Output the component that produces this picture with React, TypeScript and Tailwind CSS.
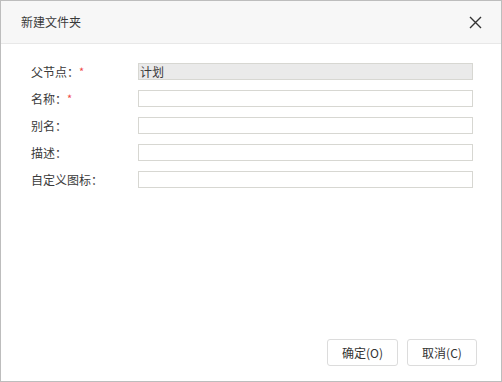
import React from 'react';

const FONT = { fontFamily: '"Noto Sans CJK SC", "Noto Sans", sans-serif' };

const FIELDS = [
  { label: '父节点：', required: true, value: '计划', disabled: true },
  { label: '名称：', required: true, value: '' },
  { label: '别名：', required: false, value: '' },
  { label: '描述：', required: false, value: '' },
  { label: '自定义图标：', required: false, value: '' },
];

const App: React.FC = () => {
  return (
    <div
      className="w-[502px] h-[382px] bg-white border border-[#bdbdbd] flex flex-col text-[12px] text-[#3a3a3a]"
      style={FONT}
    >
      {/* Header */}
      <div className="h-[43px] shrink-0 bg-[#f7f7f7] border-b border-[#e8e8e8] flex items-center justify-between pl-[20px] pr-[19px]">
        <span className="leading-none">新建文件夹</span>
        <svg width="13" height="13" viewBox="0 0 13 13" className="text-[#333]">
          <path d="M1 1 L12 12 M12 1 L1 12" stroke="currentColor" strokeWidth="1.4" fill="none" />
        </svg>
      </div>

      {/* Body */}
      <div className="flex-1 flex flex-col gap-[10px] pt-[19px] pl-[30px] pr-[28px]">
        {FIELDS.map((f) => (
          <div key={f.label} className="flex items-center h-[17px]">
            <div className="w-[107px] shrink-0 flex items-center leading-none">
              <span>{f.label}</span>
              {f.required && <span className="text-[#f04848] text-[11px] -mt-[1px]">*</span>}
            </div>
            <div
              className={`flex-1 h-[17px] border border-[#d7d7d2] flex items-center px-[1px] leading-none ${
                f.disabled ? 'bg-[#eaeaea]' : 'bg-white'
              }`}
            >
              {f.value}
            </div>
          </div>
        ))}
      </div>

      {/* Footer */}
      <div className="shrink-0 flex justify-end gap-[9px] pr-[24px] pb-[15px]">
        <button className="w-[71px] h-[27px] border border-[#dcdcdc] rounded-[3px] bg-white text-[12px] text-[#333]">
          确定(O)
        </button>
        <button className="w-[70px] h-[27px] border border-[#dcdcdc] rounded-[3px] bg-white text-[12px] text-[#333]">
          取消(C)
        </button>
      </div>
    </div>
  );
};

export default App;
